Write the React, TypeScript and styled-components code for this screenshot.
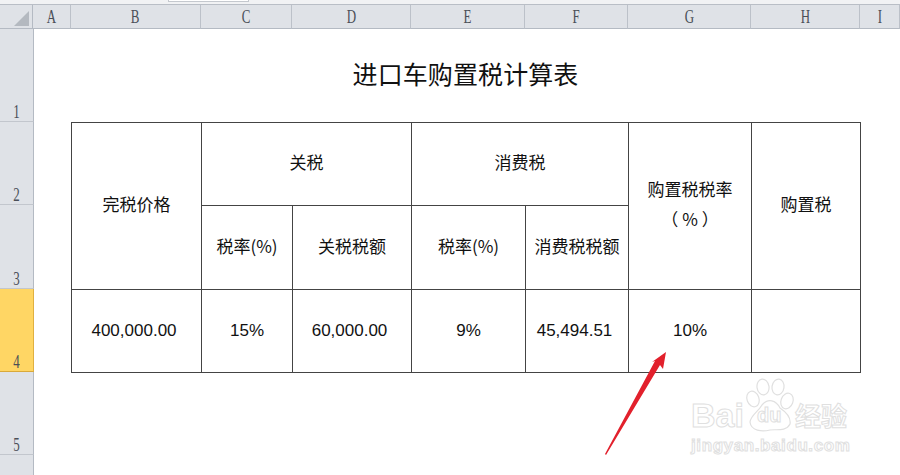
import React from "react";
import styled, { createGlobalStyle } from "styled-components";

const Global = createGlobalStyle`
  html, body { margin: 0; padding: 0; background: #fff; overflow: hidden; }
  #root { width: 900px; height: 475px; }
`;

const Page = styled.div`
  position: relative;
  width: 900px;
  height: 475px;
  overflow: hidden;
  background: #fff;
  display: flex;
  flex-direction: column;
`;

const TopStrip = styled.div`
  height: 4px;
  background: #f1f2f4;
  border-bottom: 1px solid #b9bec6;
  display: flex;
  padding-left: 168px;
`;

const StripTab = styled.div`
  width: 79px;
  height: 1px;
  background: #fff;
  border: 1px solid #c4c8ce;
  border-top: 0;
`;

const ColumnBar = styled.div`
  display: grid;
  grid-template-columns: 33px 38px 130px 91px 119px 114px 103px 123px 109px 40px;
  height: 24px;
`;

const Corner = styled.div`
  background: #dfe2e7;
  border-right: 1px solid #b4bac3;
  border-bottom: 1px solid #b4bac3;
  display: flex;
  align-items: flex-end;
  justify-content: flex-end;
  padding: 0 3px 2px 0;
`;

const ColHead = styled.div`
  background: #dfe2e7;
  border-right: 1px solid #bcc1c9;
  border-bottom: 1px solid #b4bac3;
  display: flex;
  align-items: center;
  justify-content: center;
`;

const HeadGlyph = styled.span`
  display: block;
  font: 18px/18px "Liberation Serif", serif;
  color: #4a4f57;
  transform: scaleX(0.72);
`;

const Sheet = styled.div`
  flex: 1;
  display: flex;
  min-height: 0;
`;

const RowBar = styled.div`
  width: 34px;
  flex: none;
  display: flex;
  flex-direction: column;
`;

const RowHead = styled.div<{ $h: number; $active?: boolean }>`
  height: ${(p) => p.$h}px;
  flex: none;
  background: ${(p) => (p.$active ? "#ffd664" : "#dfe2e7")};
  border-right: 1px solid ${(p) => (p.$active ? "#e0b040" : "#b4bac3")};
  border-bottom: 1px solid ${(p) => (p.$active ? "#d9a93a" : "#c2c6cd")};
  box-sizing: border-box;
  display: flex;
  align-items: flex-end;
  justify-content: center;
`;

const Canvas = styled.div`
  flex: 1;
  padding-left: 37px;
  display: flex;
  flex-direction: column;
  align-items: flex-start;
`;

const Title = styled.h1`
  margin: 0;
  width: 789px;
  height: 93px;
  box-sizing: border-box;
  padding-top: 27px;
  text-align: center;
  font: 400 25px/34px "Noto Sans CJK SC", sans-serif;
  letter-spacing: 0.1px;
  color: #111;
`;

const Table = styled.div`
  display: grid;
  grid-template-columns: 130px 91px 119px 114px 103px 123px 109px;
  grid-template-rows: 83px 84px 83px;
  width: 790px;
  border-top: 1px solid #444;
  border-left: 1px solid #444;
  box-sizing: border-box;
`;

const Cell = styled.div<{ $col: string; $row: string; $shift?: number }>`
  grid-column: ${(p) => p.$col};
  grid-row: ${(p) => p.$row};
  border-right: 1px solid #444;
  border-bottom: 1px solid #444;
  padding-right: ${(p) => p.$shift ?? 0}px;
  display: flex;
  flex-direction: column;
  align-items: center;
  justify-content: center;
  text-align: center;
  color: #111;
`;

const LabelCell = styled(Cell)`
  padding-bottom: 4px;
  font: 17px/30px "Noto Sans CJK SC", sans-serif;
`;

const Num = styled.span`
  font: 17px/24px "Liberation Sans", "Noto Sans CJK SC", sans-serif;
  color: #111;
`;

const Overlay = styled.svg`
  position: absolute;
  left: 0;
  top: 0;
  pointer-events: none;
`;

const Watermark = styled.div`
  position: absolute;
  left: 691px;
  top: 398px;
  width: 175px;
  color: #fff;
  -webkit-text-stroke: 1px #e0e0e0;
  font-family: "Liberation Sans", sans-serif;
`;

const MarkLine = styled.div`
  display: flex;
  align-items: center;
  height: 34px;
`;

const MarkBrand = styled.span`
  font: 700 34px/34px "Liberation Sans", sans-serif;
`;

const MarkDu = styled.span`
  font: 700 20px/34px "Liberation Sans", sans-serif;
  margin-left: 13px;
  width: 25px;
`;

const MarkCn = styled.span`
  font: 700 26px/34px "Noto Sans CJK SC", sans-serif;
  margin-left: 13px;
`;

const MarkUrl = styled.div`
  margin-top: 4px;
  font: 700 17px/20px "Liberation Sans", sans-serif;
  letter-spacing: 0.6px;
  white-space: nowrap;
`;

const cols = ["A", "B", "C", "D", "E", "F", "G", "H", "I"];
const rows = [
  { n: "1", h: 93 },
  { n: "2", h: 83 },
  { n: "3", h: 84 },
  { n: "4", h: 83, active: true },
  { n: "5", h: 83 },
  { n: "", h: 30 },
];

export default function App() {
  return (
    <Page>
      <Global />
      <TopStrip>
        <StripTab />
      </TopStrip>
      <ColumnBar>
        <Corner>
          <svg width="15" height="15" viewBox="0 0 15 15">
            <polygon points="15,0 15,15 0,15" fill="#b4b9c0" />
          </svg>
        </Corner>
        {cols.map((c) => (
          <ColHead key={c}>
            <HeadGlyph>{c}</HeadGlyph>
          </ColHead>
        ))}
      </ColumnBar>
      <Sheet>
        <RowBar>
          {rows.map((r, i) => (
            <RowHead key={i} $h={r.h} $active={r.active}>
              <HeadGlyph>{r.n}</HeadGlyph>
            </RowHead>
          ))}
        </RowBar>
        <Canvas>
          <Title>进口车购置税计算表</Title>
          <Table>
            <LabelCell $col="1" $row="1 / span 2">完税价格</LabelCell>
            <LabelCell $col="2 / span 2" $row="1">关税</LabelCell>
            <LabelCell $col="4 / span 2" $row="1">消费税</LabelCell>
            <LabelCell $col="6" $row="1 / span 2">
              <span>购置税税率</span>
              <span>（ % ）</span>
            </LabelCell>
            <LabelCell $col="7" $row="1 / span 2">购置税</LabelCell>
            <LabelCell $col="2" $row="2">税率(%)</LabelCell>
            <LabelCell $col="3" $row="2">关税税额</LabelCell>
            <LabelCell $col="4" $row="2">税率(%)</LabelCell>
            <LabelCell $col="5" $row="2">消费税税额</LabelCell>
            <Cell $col="1" $row="3" $shift={5}><Num>400,000.00</Num></Cell>
            <Cell $col="2" $row="3"><Num>15%</Num></Cell>
            <Cell $col="3" $row="3" $shift={5}><Num>60,000.00</Num></Cell>
            <Cell $col="4" $row="3"><Num>9%</Num></Cell>
            <Cell $col="5" $row="3" $shift={5}><Num>45,494.51</Num></Cell>
            <Cell $col="6" $row="3"><Num>10%</Num></Cell>
            <Cell $col="7" $row="3" />
          </Table>
        </Canvas>
      </Sheet>
      <Overlay width="900" height="475" viewBox="0 0 900 475">
        <g fill="#fff" stroke="#e0e0e0" strokeWidth="1.2">
          <ellipse cx="753" cy="399" rx="6" ry="8" transform="rotate(-20 753 399)" />
          <ellipse cx="763" cy="387" rx="6" ry="8" transform="rotate(-8 763 387)" />
          <ellipse cx="778" cy="387" rx="6" ry="8" transform="rotate(8 778 387)" />
          <ellipse cx="787" cy="401" rx="6" ry="8" transform="rotate(20 787 401)" />
          <path d="M762 405 C768 398 776 400 780 408 C786 412 791 418 790 424 C786 432 776 429 770 430 C762 432 751 431 750 422 C751 415 758 412 762 405 Z" />
        </g>
        <polygon points="666,352 663,369 660,365 606,455 605,454 655,361 652,362" fill="#e2202c" />
      </Overlay>
      <Watermark>
        <MarkLine>
          <MarkBrand>Bai</MarkBrand>
          <MarkDu>du</MarkDu>
          <MarkCn>经验</MarkCn>
        </MarkLine>
        <MarkUrl>jingyan.baidu.com</MarkUrl>
      </Watermark>
    </Page>
  );
}
